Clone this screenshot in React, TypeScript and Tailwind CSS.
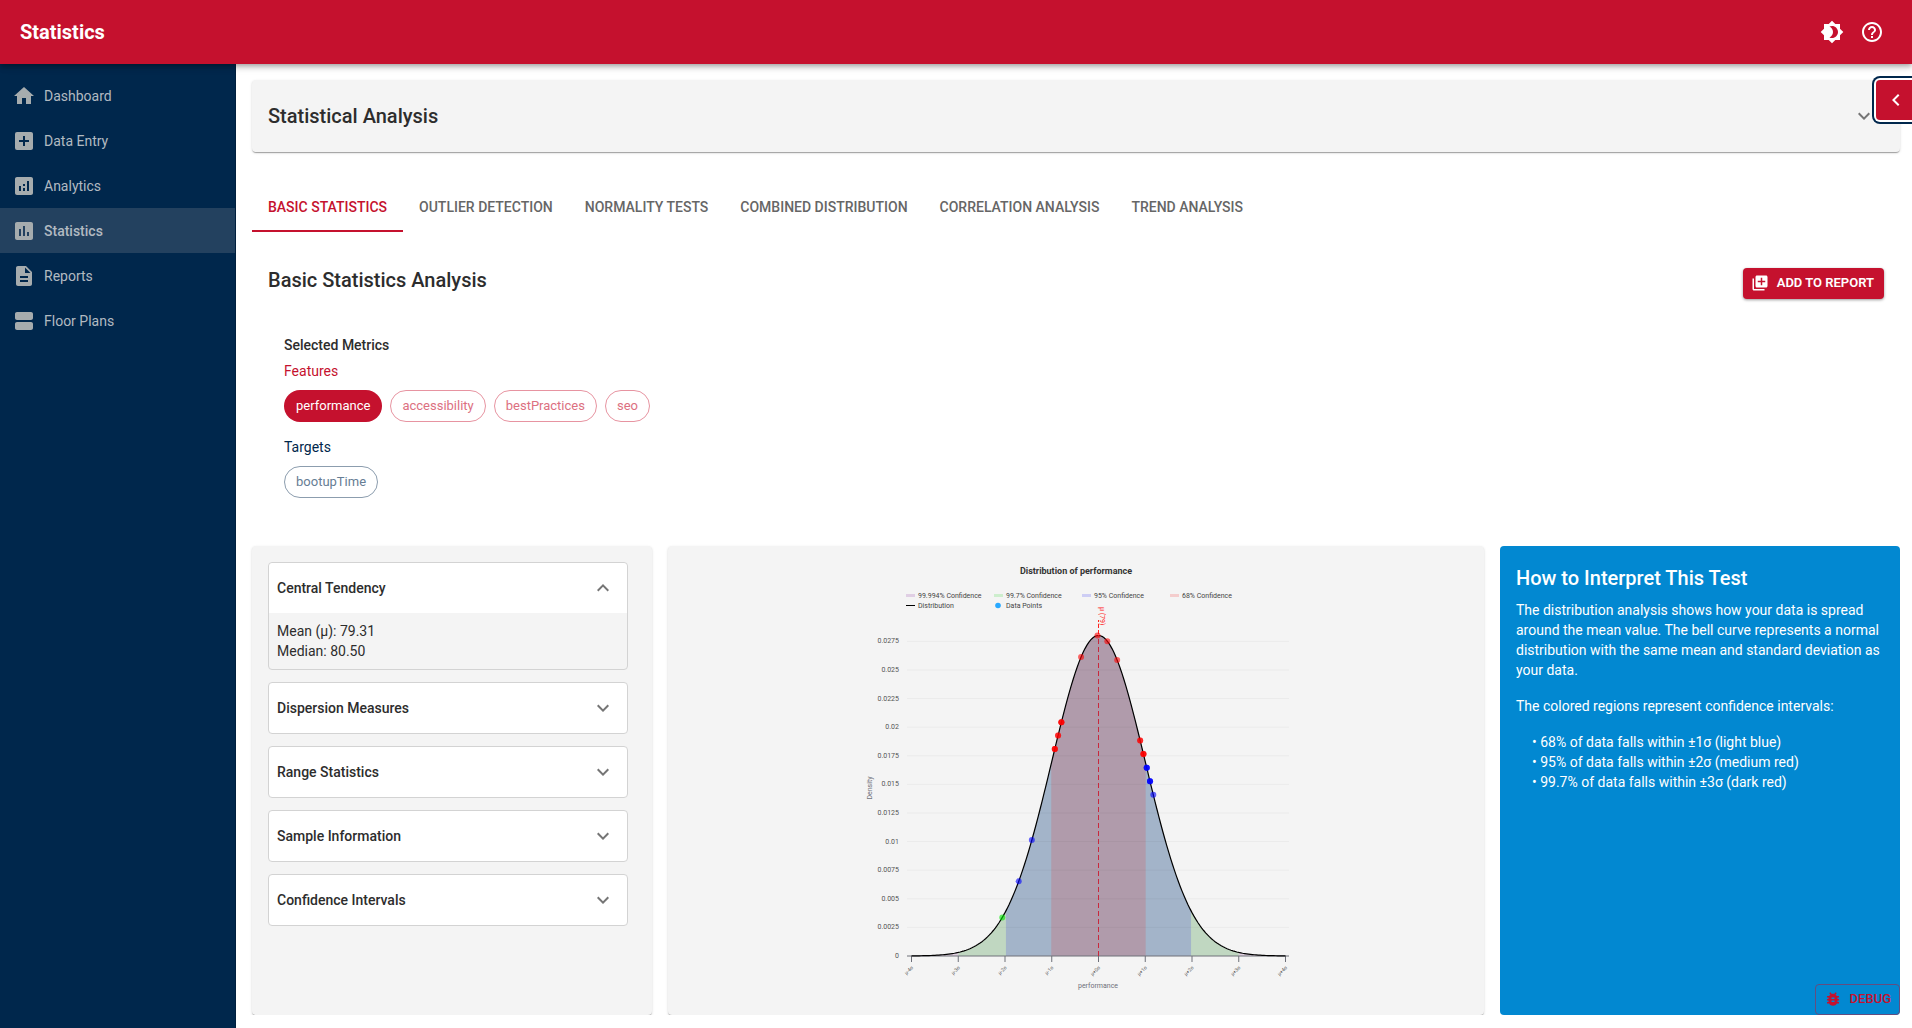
import {
  MdAddBox, MdAnalytics, MdAssessment, MdBrightness4, MdBugReport, MdChevronLeft, MdDescription,
  MdExpandLess, MdExpandMore, MdHelpOutline, MdHome, MdLibraryAdd, MdViewAgenda,
} from "react-icons/md";

const NAV = [
  { label: "Dashboard", Icon: MdHome },
  { label: "Data Entry", Icon: MdAddBox },
  { label: "Analytics", Icon: MdAnalytics },
  { label: "Statistics", Icon: MdAssessment, active: true },
  { label: "Reports", Icon: MdDescription },
  { label: "Floor Plans", Icon: MdViewAgenda },
];

const TABS = ["Basic Statistics", "Outlier Detection", "Normality Tests", "Combined Distribution", "Correlation Analysis", "Trend Analysis"];

const FEATURES = ["accessibility", "bestPractices", "seo"];

const SECTIONS = ["Dispersion Measures", "Range Statistics", "Sample Information", "Confidence Intervals"];

const CARD = "rounded bg-[#f4f4f4] shadow-[0_2px_1px_-1px_rgba(0,0,0,0.2),0_1px_1px_0_rgba(0,0,0,0.14),0_1px_3px_0_rgba(0,0,0,0.12)]";

/* Chart geometry: the mean sits at MEAN_X, one sigma spans SIGMA_PX. */
const MEAN = 79.31;
const SIGMA = 14.24;
const MEAN_X = 252.5;
const SIGMA_PX = 46.75;
const BASE_Y = 410;
const PEAK = 320.5;
const STEP_Y = 28.6;

const curveY = (z: number) => BASE_Y - PEAK * Math.exp((-z * z) / 2);
const px = (z: number) => MEAN_X + z * SIGMA_PX;

function points(from: number, to: number) {
  const n = Math.ceil((to - from) * 24);
  return Array.from({ length: n + 1 }, (_, i) => {
    const z = from + ((to - from) * i) / n;
    return `${px(z).toFixed(2)},${curveY(z).toFixed(2)}`;
  });
}

const line = (from: number, to: number) => "M" + points(from, to).join("L");
const area = (from: number, to: number) => `${line(from, to)}L${px(to)},${BASE_Y}L${px(from)},${BASE_Y}Z`;

const TICKS = ["0", "0.0025", "0.005", "0.0075", "0.01", "0.0125", "0.015", "0.0175", "0.02", "0.0225", "0.025", "0.0275"];
const SIGMAS = ["μ-4σ", "μ-3σ", "μ-2σ", "μ-1σ", "μ+0σ", "μ+1σ", "μ+2σ", "μ+3σ", "μ+4σ"];
const SAMPLES = [50, 55, 59, 66, 66, 66, 67, 67, 68, 68, 68, 74, 79, 82, 85, 92, 92, 93, 93, 93, 94, 94, 94, 95, 95, 95, 96];
const LEGEND = [
  { label: "99.994% Confidence", color: "#e0cfe4" },
  { label: "99.7% Confidence", color: "#cdeecd" },
  { label: "95% Confidence", color: "#cdcdf4" },
  { label: "68% Confidence", color: "#f4cdcd" },
];

function dotColor(v: number) {
  const z = Math.abs(v - MEAN) / SIGMA;
  return z <= 1 ? "#ff0000" : z <= 2 ? "#0000ff" : "#00e600";
}

function DistributionChart() {
  return (
    <svg viewBox="0 0 460 469" width="460" height="469" className="max-w-full" role="img" aria-label="Distribution of performance" fontFamily="Roboto, sans-serif">
      <text x="230" y="28" fontSize="9" fontWeight="700" textAnchor="middle" fill="#333">Distribution of performance</text>
      {LEGEND.map((l, i) => (
        <g key={l.label}>
          <rect x={60 + i * 88} y="48" width="9" height="3" fill={l.color} />
          <text x={72 + i * 88} y="52" fontSize="7" fill="#444">{l.label}</text>
        </g>
      ))}
      <path d="M60 59.5h9" stroke="#000" />
      <text x="72" y="62" fontSize="7" fill="#444">Distribution</text>
      <circle cx="152" cy="59.5" r="2.8" fill="#29a9ff" />
      <text x="160" y="62" fontSize="7" fill="#444">Data Points</text>

      <path d={area(-4, 4)} fill="#e0d0e0" />
      <path d={area(-3, 3)} fill="#c0d7c1" />
      <path d={area(-1.98, 1.98)} fill="#a3b4c9" />
      <path d={area(-1.01, 1.01)} fill="#b09bab" />

      {TICKS.map((t, i) => (
        <g key={t}>
          {i > 0 && <path d={`M61 ${BASE_Y - i * STEP_Y}H443`} stroke="#000" strokeOpacity="0.04" />}
          <text x="53" y={BASE_Y + 2 - i * STEP_Y} fontSize="7" textAnchor="end" fill="#555">{t}</text>
        </g>
      ))}
      <path d="M61 410H443" stroke="#6e7079" />
      {SIGMAS.map((s, i) => (
        <g key={s}>
          <path d={`M${px(i - 4)} 410v6`} stroke="#6e7079" />
          <text transform={`translate(${px(i - 4) + 2} 422) rotate(-45)`} fontSize="5" textAnchor="end" fill="#555">{s}</text>
        </g>
      ))}
      <text x="252" y="442" fontSize="7" textAnchor="middle" fill="#6e7079">performance</text>
      <text transform="translate(26 242) rotate(-90)" fontSize="7" textAnchor="middle" fill="#6e7079">Density</text>

      <path d={line(-4, 4)} fill="none" stroke="#000" strokeWidth="1.2" />
      <path d={`M${MEAN_X} 410V89`} stroke="#c8283c" strokeDasharray="5 3" />
      <path d={`M${MEAN_X} 88V74`} stroke="#f22" strokeDasharray="4 2" />
      <text transform="translate(254 61) rotate(90)" fontSize="7" fill="#f22">μ (79)</text>
      {SAMPLES.map((v, i) => {
        const z = (v - MEAN) / SIGMA;
        return <circle key={i} cx={px(z)} cy={curveY(z)} r="3" fill={dotColor(v)} fillOpacity="0.6" />;
      })}
    </svg>
  );
}

export default function App() {
  return (
    <div className="flex min-h-screen flex-col bg-white font-['Roboto',sans-serif] text-[#2d2d2d]">
      <header className="relative z-10 flex h-16 items-center justify-between bg-[#c5112e] px-5 text-white shadow-[0_2px_4px_-1px_rgba(0,0,0,0.2),0_4px_5px_0_rgba(0,0,0,0.14),0_1px_10px_0_rgba(0,0,0,0.12)]">
        <h1 className="text-xl font-bold">Statistics</h1>
        <div className="flex">
          <button aria-label="Toggle theme" className="p-2"><MdBrightness4 size={24} /></button>
          <button aria-label="Help" className="p-2"><MdHelpOutline size={24} /></button>
        </div>
      </header>
      <div className="flex flex-1">
        <nav className="w-[236px] shrink-0 border-r border-[#001f3d] bg-[#00274c] pt-[9px] text-sm text-[#b2bac1]">
          {NAV.map(({ label, Icon, active }) => (
            <a key={label} href="#" className={active ? "flex h-[45px] items-center gap-2 bg-[#23415f] px-3 font-medium" : "flex h-[45px] items-center gap-2 px-3"}>
              <Icon size={24} className="text-[#a6acae]" />
              {label}
            </a>
          ))}
        </nav>
        <main className="relative flex min-w-0 flex-1 flex-col pt-4 pr-3 pb-[13px] pl-4">
          <button aria-expanded="false" className={`flex h-[72px] items-center justify-between pr-6 pl-4 text-xl font-medium ${CARD}`}>
            Statistical Analysis
            <MdExpandMore size={24} className="text-[#757575]" />
          </button>
          <button aria-label="Open panel" className="absolute top-4 right-0 flex h-10 w-9 items-center justify-center rounded-l bg-[#c5112e] pl-1 text-white shadow-[0_0_0_2px_#fff,0_0_0_4px_#00274c]">
            <MdChevronLeft size={24} />
          </button>

          <div role="tablist" className="mt-8 flex h-12 text-sm font-medium text-[#666]">
            {TABS.map((t, i) => (
              <button key={t} role="tab" aria-selected={i === 0} className={i === 0 ? "border-b-2 border-[#c5112e] px-4 text-[#c5112e] uppercase" : "border-b-2 border-transparent px-4 uppercase"}>
                {t}
              </button>
            ))}
          </div>

          <div className="mt-8 flex items-start justify-between px-4">
            <h2 className="text-xl leading-8 font-medium">Basic Statistics Analysis</h2>
            <button className="mt-1 flex h-[31px] items-center gap-2 rounded bg-[#c5112e] pr-2.5 pb-px pl-2 text-[13px] font-semibold text-white uppercase shadow-[0_1px_3px_rgba(0,0,0,0.4)]">
              <MdLibraryAdd size={18} />
              Add to report
            </button>
          </div>

          <section className="mt-9 px-8 text-sm">
            <h3 className="leading-5 font-medium">Selected Metrics</h3>
            <h4 className="mt-1.5 leading-5 text-[#c5112e]">Features</h4>
            <div className="mt-[9px] flex gap-2 text-[13px]">
              <button className="h-8 rounded-full bg-[#c5112e] px-3 text-white">performance</button>
              {FEATURES.map((f) => (
                <button key={f} className="h-8 rounded-full border border-[#e794a1] px-[11px] text-[#dc7081]">{f}</button>
              ))}
            </div>
            <h4 className="mt-[15px] leading-5 text-[#00274c]">Targets</h4>
            <div className="mt-[9px] flex text-[13px]">
              <button className="h-8 rounded-full border border-[#8c9dae] px-[11px] text-[#667d94]">bootupTime</button>
            </div>
          </section>

          <div className="mt-12 grid flex-1 grid-cols-12 gap-4 [clip-path:inset(-4px_-4px_0_-4px)]">
            <section className={`col-span-3 flex flex-col gap-3 py-4 pr-6 pl-4 text-sm ${CARD}`}>
              <div className="rounded border border-[#d3d3d3]">
                <button aria-expanded="true" className="flex h-[50px] w-full items-center justify-between rounded-t bg-white pr-3 pl-2 font-medium">
                  Central Tendency
                  <MdExpandLess size={24} className="text-[#757575]" />
                </button>
                <div className="px-2 pt-2 pb-2 leading-5">
                  <p>Mean (μ): 79.31</p>
                  <p>Median: 80.50</p>
                </div>
              </div>
              {SECTIONS.map((s) => (
                <button key={s} aria-expanded="false" className="flex h-[52px] items-center justify-between rounded border border-[#d3d3d3] bg-white pr-3 pl-2 font-medium">
                  {s}
                  <MdExpandMore size={24} className="text-[#757575]" />
                </button>
              ))}
            </section>
            <section className={`col-span-6 flex justify-center ${CARD}`}>
              <DistributionChart />
            </section>
            <section className="relative col-span-3 rounded bg-[#0288d1] p-4 text-sm leading-5 text-white">
              <h2 className="text-xl leading-8 font-medium">How to Interpret This Test</h2>
              <p className="mt-1.5">
                The distribution analysis shows how your data is spread around the mean value. The bell curve represents a normal distribution with the same mean and standard deviation as your data.
              </p>
              <p className="mt-4">The colored regions represent confidence intervals:</p>
              <ul className="mt-4 pl-4">
                <li>• 68% of data falls within ±1σ (light blue)</li>
                <li>• 95% of data falls within ±2σ (medium red)</li>
                <li>• 99.7% of data falls within ±3σ (dark red)</li>
              </ul>
              <button className="absolute right-0 bottom-0 flex h-[31px] items-center gap-2 rounded border border-[#634d80] px-2 pb-px text-[13px] font-medium text-[#c5112e] uppercase">
                <MdBugReport size={18} />
                Debug
              </button>
            </section>
          </div>
        </main>
      </div>
    </div>
  );
}
